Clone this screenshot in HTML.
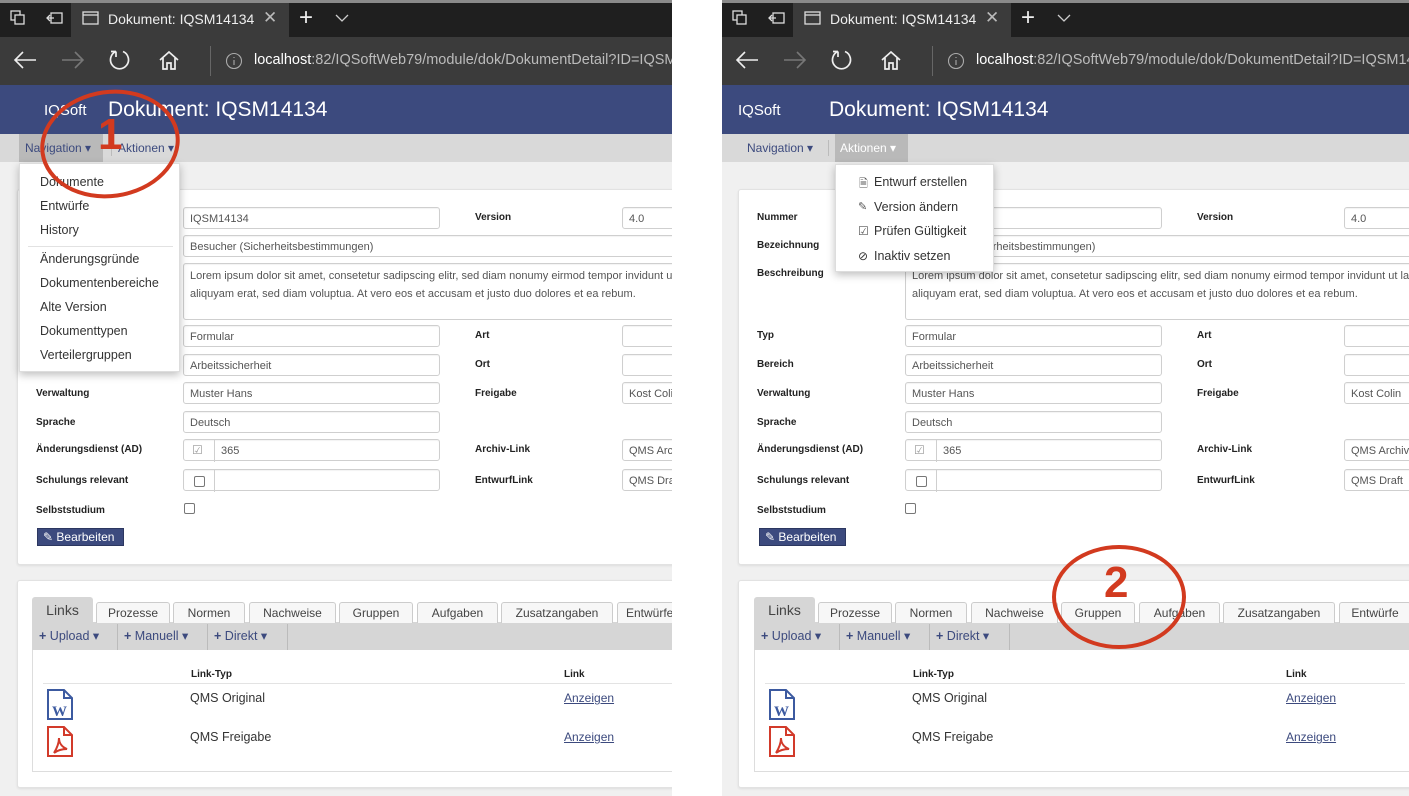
<!DOCTYPE html>
<html><head><meta charset="utf-8">
<style>
*{box-sizing:border-box;margin:0;padding:0}
body{width:1409px;height:796px;background:#fff;position:relative;overflow:hidden;font-family:"Liberation Sans",sans-serif;font-size:12px;color:#333}
.p{position:absolute;top:0;height:796px;overflow:hidden;background:#f0f0f0}
.a{position:absolute;white-space:nowrap}
.tb{position:absolute;left:0;right:0;top:0;height:37px;background:#1f1f1f;border-top:3px solid #8a8a8a}
.atab{position:absolute;left:71px;top:3px;width:218px;height:34px;background:#3b3b3b}
.ab{position:absolute;left:0;right:0;top:37px;height:48px;background:#3b3b3b}
.hd{position:absolute;left:0;right:0;top:85px;height:49px;background:#3c4a7e;color:#fff}
.mb{position:absolute;left:0;right:0;top:134px;height:28px;background:#d9d9d9;color:#3c4a7e;font-size:12px}
.card{position:absolute;background:#fff;border:1px solid #e2e2e2;border-radius:3px;box-shadow:0 1px 2px rgba(0,0,0,.08)}
.lb{position:absolute;font-size:10px;font-weight:bold;color:#222;white-space:nowrap;margin-top:3px}
.in{position:absolute;height:22px;border:1px solid #cfcfcf;border-radius:3px;background:#fff;font-size:11px;color:#555;padding:5px 6px;white-space:nowrap;overflow:hidden;box-shadow:inset 0 1px 1px rgba(0,0,0,.05)}
.cb{position:absolute;width:11px;height:11px;border:1px solid #777;border-radius:2px;background:#fff}
.tab{position:absolute;top:602px;height:21px;border:1px solid #ccc;border-bottom:none;background:#f7f7f7;font-size:12px;color:#444;text-align:center;padding-top:3px;border-radius:3px 3px 0 0;white-space:nowrap;overflow:hidden}
.dd{position:absolute;background:#fff;box-shadow:0 3px 8px rgba(0,0,0,.25);border:1px solid #ddd;font-size:12.5px;color:#333}
.lnk{color:#3c4a7e;text-decoration:underline;font-size:12px}
.circ{position:absolute;border:4px solid #d23a1f;border-radius:50%}
.num{position:absolute;color:#d23a1f;font-weight:bold;font-family:"Liberation Sans",sans-serif}
.ta{height:57px;line-height:18px;padding-top:3px}
</style></head><body>

<!-- LEFT PANEL -->
<div class="p" style="left:0;width:672px">
 <div class="tb"></div><div class="atab"></div>
 <svg class="a" style="left:10px;top:10px" width="16" height="16" fill="none" stroke="#ddd" stroke-width="1.3"><rect x="1" y="1" width="9" height="9"/><rect x="5" y="5" width="9" height="9" fill="#1f1f1f"/></svg>
 <svg class="a" style="left:46px;top:11px" width="18" height="14" fill="none" stroke="#ddd" stroke-width="1.3"><rect x="5" y="2" width="11" height="10"/><path d="M1 7h7M4 4l-3 3 3 3"/></svg>
 <svg class="a" style="left:82px;top:11px" width="17" height="14" fill="none" stroke="#ddd" stroke-width="1.3"><rect x="1" y="1" width="15" height="12"/><path d="M1 4h15"/></svg>
 <div class="a" style="left:108px;top:11px;color:#eee;font-size:14px">Dokument: IQSM14134</div>
 <div class="a" style="left:263px;top:8px;color:#bbb;font-size:17px">✕</div>
 <div class="a" style="left:299px;top:4px;color:#eee;font-size:24px;font-weight:300">+</div>
 <svg class="a" style="left:335px;top:14px" width="14" height="9" fill="none" stroke="#ccc" stroke-width="1.3"><path d="M1 1l6 6 6-6"/></svg>
 <div class="ab"></div>
 <svg class="a" style="left:13px;top:50px" width="24" height="20" fill="none" stroke="#eee" stroke-width="1.6"><path d="M23 10H2M10 2l-8 8 8 8"/></svg>
 <svg class="a" style="left:61px;top:50px" width="24" height="20" fill="none" stroke="#777" stroke-width="1.6"><path d="M1 10h21M14 2l8 8-8 8"/></svg>
 <svg class="a" style="left:109px;top:48px" width="22" height="24" fill="none" stroke="#eee" stroke-width="1.7"><path d="M7 3.5A9 9 0 1 0 14 3.5M7 3.5V9M7 3.5H2"/></svg>
 <svg class="a" style="left:158px;top:50px" width="22" height="20" fill="none" stroke="#eee" stroke-width="1.7"><path d="M2 10L11 2l9 8M5 8v11h4v-6h4v6h4V8"/></svg>
 <div class="a" style="left:210px;top:46px;width:1px;height:30px;background:#666"></div>
 <svg class="a" style="left:225px;top:52px" width="18" height="18" fill="none" stroke="#aaa" stroke-width="1.1"><circle cx="9" cy="9" r="7.5"/><path d="M9 8v5M9 5v1"/></svg>
 <div class="a" style="left:254px;top:52px;color:#bbb;font-size:14.5px"><b style="color:#fff;font-weight:normal">localhost</b>:82/IQSoftWeb79/module/dok/DokumentDetail?ID=IQSM14134</div>
 <div class="hd"><div class="a" style="left:44px;top:17px;font-size:15px">IQSoft</div><div class="a" style="left:108px;top:13px;font-size:21px">Dokument: IQSM14134</div></div>
 <div class="mb">
  <div class="a" style="left:19px;top:0;width:84px;height:28px;background:#b9b9b9"></div>
  <div class="a" style="left:25px;top:7px">Navigation ▾</div>
  <div class="a" style="left:111px;top:6px;width:1px;height:16px;background:#bbb"></div>
  <div class="a" style="left:118px;top:7px">Aktionen ▾</div>
 </div>
 <div class="card" style="left:17px;top:189px;width:700px;height:376px"></div>
 <div class="lb" style="left:36px;top:209px">Nummer</div>
 <div class="lb" style="left:36px;top:237px">Bezeichnung</div>
 <div class="lb" style="left:36px;top:265px">Beschreibung</div>
 <div class="lb" style="left:36px;top:327px">Typ</div>
 <div class="lb" style="left:36px;top:356px">Bereich</div>
 <div class="lb" style="left:36px;top:385px">Verwaltung</div>
 <div class="lb" style="left:36px;top:414px">Sprache</div>
 <div class="lb" style="left:36px;top:441px">Änderungsdienst (AD)</div>
 <div class="lb" style="left:36px;top:472px">Schulungs relevant</div>
 <div class="lb" style="left:36px;top:502px">Selbststudium</div>
 <div class="in" style="left:183px;top:207px;width:257px">IQSM14134</div>
 <div class="in" style="left:183px;top:235px;width:520px">Besucher (Sicherheitsbestimmungen)</div>
 <div class="in ta" style="left:183px;top:263px;width:520px">Lorem ipsum dolor sit amet, consetetur sadipscing elitr, sed diam nonumy eirmod tempor invidunt ut labore et dolore magna<br>aliquyam erat, sed diam voluptua. At vero eos et accusam et justo duo dolores et ea rebum.</div>
 <div class="in" style="left:183px;top:325px;width:257px">Formular</div>
 <div class="in" style="left:183px;top:354px;width:257px">Arbeitssicherheit</div>
 <div class="in" style="left:183px;top:382px;width:257px">Muster Hans</div>
 <div class="in" style="left:183px;top:411px;width:257px">Deutsch</div>
 <div class="in" style="left:183px;top:439px;width:257px;padding-left:37px">365</div>
 <div class="a" style="left:214px;top:440px;width:1px;height:22px;background:#cfcfcf"></div>
 <div class="a" style="left:192px;top:443px;color:#999;font-size:12px">☑</div>
 <div class="in" style="left:183px;top:469px;width:257px"></div>
 <div class="a" style="left:214px;top:470px;width:1px;height:22px;background:#cfcfcf"></div>
 <div class="cb" style="left:194px;top:476px"></div>
 <div class="cb" style="left:184px;top:503px"></div>
 <div class="a" style="left:37px;top:528px;width:87px;height:18px;background:#3c4a7e;border:1px solid #2c3760;color:#fff;font-size:12px;padding:1px 0 0 5px">✎ Bearbeiten</div>
 <div class="lb" style="left:475px;top:209px">Version</div>
 <div class="lb" style="left:475px;top:327px">Art</div>
 <div class="lb" style="left:475px;top:356px">Ort</div>
 <div class="lb" style="left:475px;top:385px">Freigabe</div>
 <div class="lb" style="left:475px;top:441px">Archiv-Link</div>
 <div class="lb" style="left:475px;top:472px">EntwurfLink</div>
 <div class="in" style="left:622px;top:207px;width:100px">4.0</div>
 <div class="in" style="left:622px;top:325px;width:100px"></div>
 <div class="in" style="left:622px;top:354px;width:100px"></div>
 <div class="in" style="left:622px;top:382px;width:100px">Kost Colin</div>
 <div class="in" style="left:622px;top:439px;width:100px">QMS Archiv</div>
 <div class="in" style="left:622px;top:469px;width:100px">QMS Draft</div>

 <div class="card" style="left:17px;top:580px;width:700px;height:208px"></div>
 <div class="a" style="left:32px;top:622px;width:680px;height:150px;border:1px solid #ddd;background:#fff"></div>
 <div class="a" style="left:32px;top:622px;width:680px;height:28px;background:#d6d6d6"></div>
 <div class="tab" style="left:32px;top:597px;width:61px;height:26px;background:#d6d6d6;border-color:#d6d6d6;font-size:14px;padding-top:4px">Links</div>
 <div class="tab" style="left:96px;width:74px">Prozesse</div>
 <div class="tab" style="left:173px;width:72px">Normen</div>
 <div class="tab" style="left:249px;width:87px">Nachweise</div>
 <div class="tab" style="left:339px;width:74px">Gruppen</div>
 <div class="tab" style="left:417px;width:81px">Aufgaben</div>
 <div class="tab" style="left:501px;width:112px">Zusatzangaben</div>
 <div class="tab" style="left:617px;width:80px;text-align:left;padding-left:8px">Entwürfe</div>
 <div class="a" style="left:39px;top:628px;color:#3c4a7e;font-size:12.5px"><b>+</b> Upload ▾</div>
 <div class="a" style="left:117px;top:624px;width:1px;height:26px;background:#bbb"></div>
 <div class="a" style="left:124px;top:628px;color:#3c4a7e;font-size:12.5px"><b>+</b> Manuell ▾</div>
 <div class="a" style="left:207px;top:624px;width:1px;height:26px;background:#bbb"></div>
 <div class="a" style="left:214px;top:628px;color:#3c4a7e;font-size:12.5px"><b>+</b> Direkt ▾</div>
 <div class="a" style="left:287px;top:624px;width:1px;height:26px;background:#bbb"></div>
 <div class="lb" style="left:191px;top:666px">Link-Typ</div>
 <div class="lb" style="left:564px;top:666px">Link</div>
 <div class="a" style="left:43px;top:683px;width:640px;height:1px;background:#e3e3e3"></div>
 <svg class="a" style="left:46px;top:688px" width="28" height="33" fill="none" stroke="#3c5aa0" stroke-width="2"><path d="M2 2h16l8 8v21H2zM18 2v8h8"/><text x="6" y="28" font-family="Liberation Serif" font-size="15" font-weight="bold" fill="#3c5aa0" stroke="none">W</text></svg>
 <div class="a" style="left:190px;top:691px;font-size:12.5px">QMS Original</div>
 <div class="a lnk" style="left:564px;top:691px">Anzeigen</div>
 <svg class="a" style="left:46px;top:725px" width="28" height="33" fill="none" stroke="#d23a2a" stroke-width="2"><path d="M2 2h16l8 8v21H2zM18 2v8h8M8 28c3-5 5-10 5-15 0 5 3 9 8 11-5 0-9 1-13 4"/></svg>
 <div class="a" style="left:190px;top:730px;font-size:12.5px">QMS Freigabe</div>
 <div class="a lnk" style="left:564px;top:730px">Anzeigen</div>

 <div class="dd" style="left:19px;top:163px;width:161px;height:209px">
  <div class="a" style="left:20px;top:11px">Dokumente</div>
  <div class="a" style="left:20px;top:35px">Entwürfe</div>
  <div class="a" style="left:20px;top:59px">History</div>
  <div class="a" style="left:8px;top:82px;width:145px;height:1px;background:#e2e2e2"></div>
  <div class="a" style="left:20px;top:88px">Änderungsgründe</div>
  <div class="a" style="left:20px;top:112px">Dokumentenbereiche</div>
  <div class="a" style="left:20px;top:136px">Alte Version</div>
  <div class="a" style="left:20px;top:160px">Dokumenttypen</div>
  <div class="a" style="left:20px;top:184px">Verteilergruppen</div>
 </div>
 <div class="circ" style="left:40px;top:90px;width:140px;height:108px;transform:rotate(-8deg)"></div>
 <div class="num" style="left:98px;top:110px;font-size:44px">1</div>
</div>

<!-- RIGHT PANEL -->
<div class="p" style="left:722px;width:687px">
 <div class="tb"></div><div class="atab"></div>
 <svg class="a" style="left:10px;top:10px" width="16" height="16" fill="none" stroke="#ddd" stroke-width="1.3"><rect x="1" y="1" width="9" height="9"/><rect x="5" y="5" width="9" height="9" fill="#1f1f1f"/></svg>
 <svg class="a" style="left:46px;top:11px" width="18" height="14" fill="none" stroke="#ddd" stroke-width="1.3"><rect x="5" y="2" width="11" height="10"/><path d="M1 7h7M4 4l-3 3 3 3"/></svg>
 <svg class="a" style="left:82px;top:11px" width="17" height="14" fill="none" stroke="#ddd" stroke-width="1.3"><rect x="1" y="1" width="15" height="12"/><path d="M1 4h15"/></svg>
 <div class="a" style="left:108px;top:11px;color:#eee;font-size:14px">Dokument: IQSM14134</div>
 <div class="a" style="left:263px;top:8px;color:#bbb;font-size:17px">✕</div>
 <div class="a" style="left:299px;top:4px;color:#eee;font-size:24px;font-weight:300">+</div>
 <svg class="a" style="left:335px;top:14px" width="14" height="9" fill="none" stroke="#ccc" stroke-width="1.3"><path d="M1 1l6 6 6-6"/></svg>
 <div class="ab"></div>
 <svg class="a" style="left:13px;top:50px" width="24" height="20" fill="none" stroke="#eee" stroke-width="1.6"><path d="M23 10H2M10 2l-8 8 8 8"/></svg>
 <svg class="a" style="left:61px;top:50px" width="24" height="20" fill="none" stroke="#777" stroke-width="1.6"><path d="M1 10h21M14 2l8 8-8 8"/></svg>
 <svg class="a" style="left:109px;top:48px" width="22" height="24" fill="none" stroke="#eee" stroke-width="1.7"><path d="M7 3.5A9 9 0 1 0 14 3.5M7 3.5V9M7 3.5H2"/></svg>
 <svg class="a" style="left:158px;top:50px" width="22" height="20" fill="none" stroke="#eee" stroke-width="1.7"><path d="M2 10L11 2l9 8M5 8v11h4v-6h4v6h4V8"/></svg>
 <div class="a" style="left:210px;top:46px;width:1px;height:30px;background:#666"></div>
 <svg class="a" style="left:225px;top:52px" width="18" height="18" fill="none" stroke="#aaa" stroke-width="1.1"><circle cx="9" cy="9" r="7.5"/><path d="M9 8v5M9 5v1"/></svg>
 <div class="a" style="left:254px;top:52px;color:#bbb;font-size:14.5px"><b style="color:#fff;font-weight:normal">localhost</b>:82/IQSoftWeb79/module/dok/DokumentDetail?ID=IQSM14134</div>
 <div class="hd"><div class="a" style="left:16px;top:17px;font-size:15px">IQSoft</div><div class="a" style="left:107px;top:13px;font-size:21px">Dokument: IQSM14134</div></div>
 <div class="mb">
  <div class="a" style="left:25px;top:7px">Navigation ▾</div>
  <div class="a" style="left:106px;top:6px;width:1px;height:16px;background:#bbb"></div>
  <div class="a" style="left:113px;top:0;width:73px;height:28px;background:#b9b9b9"></div>
  <div class="a" style="left:118px;top:7px;color:#fff">Aktionen ▾</div>
 </div>
 <div class="card" style="left:16px;top:189px;width:700px;height:376px"></div>
 <div class="lb" style="left:35px;top:209px">Nummer</div>
 <div class="lb" style="left:35px;top:237px">Bezeichnung</div>
 <div class="lb" style="left:35px;top:265px">Beschreibung</div>
 <div class="lb" style="left:35px;top:327px">Typ</div>
 <div class="lb" style="left:35px;top:356px">Bereich</div>
 <div class="lb" style="left:35px;top:385px">Verwaltung</div>
 <div class="lb" style="left:35px;top:414px">Sprache</div>
 <div class="lb" style="left:35px;top:441px">Änderungsdienst (AD)</div>
 <div class="lb" style="left:35px;top:472px">Schulungs relevant</div>
 <div class="lb" style="left:35px;top:502px">Selbststudium</div>
 <div class="in" style="left:183px;top:207px;width:257px">IQSM14134</div>
 <div class="in" style="left:183px;top:235px;width:520px">Besucher (Sicherheitsbestimmungen)</div>
 <div class="in ta" style="left:183px;top:263px;width:520px">Lorem ipsum dolor sit amet, consetetur sadipscing elitr, sed diam nonumy eirmod tempor invidunt ut labore et dolore magna<br>aliquyam erat, sed diam voluptua. At vero eos et accusam et justo duo dolores et ea rebum.</div>
 <div class="in" style="left:183px;top:325px;width:257px">Formular</div>
 <div class="in" style="left:183px;top:354px;width:257px">Arbeitssicherheit</div>
 <div class="in" style="left:183px;top:382px;width:257px">Muster Hans</div>
 <div class="in" style="left:183px;top:411px;width:257px">Deutsch</div>
 <div class="in" style="left:183px;top:439px;width:257px;padding-left:37px">365</div>
 <div class="a" style="left:214px;top:440px;width:1px;height:22px;background:#cfcfcf"></div>
 <div class="a" style="left:192px;top:443px;color:#999;font-size:12px">☑</div>
 <div class="in" style="left:183px;top:469px;width:257px"></div>
 <div class="a" style="left:214px;top:470px;width:1px;height:22px;background:#cfcfcf"></div>
 <div class="cb" style="left:194px;top:476px"></div>
 <div class="cb" style="left:183px;top:503px"></div>
 <div class="a" style="left:37px;top:528px;width:87px;height:18px;background:#3c4a7e;border:1px solid #2c3760;color:#fff;font-size:12px;padding:1px 0 0 5px">✎ Bearbeiten</div>
 <div class="lb" style="left:475px;top:209px">Version</div>
 <div class="lb" style="left:475px;top:327px">Art</div>
 <div class="lb" style="left:475px;top:356px">Ort</div>
 <div class="lb" style="left:475px;top:385px">Freigabe</div>
 <div class="lb" style="left:475px;top:441px">Archiv-Link</div>
 <div class="lb" style="left:475px;top:472px">EntwurfLink</div>
 <div class="in" style="left:622px;top:207px;width:100px">4.0</div>
 <div class="in" style="left:622px;top:325px;width:100px"></div>
 <div class="in" style="left:622px;top:354px;width:100px"></div>
 <div class="in" style="left:622px;top:382px;width:100px">Kost Colin</div>
 <div class="in" style="left:622px;top:439px;width:100px">QMS Archiv</div>
 <div class="in" style="left:622px;top:469px;width:100px">QMS Draft</div>

 <div class="card" style="left:16px;top:580px;width:700px;height:208px"></div>
 <div class="a" style="left:32px;top:622px;width:680px;height:150px;border:1px solid #ddd;background:#fff"></div>
 <div class="a" style="left:32px;top:622px;width:680px;height:28px;background:#d6d6d6"></div>
 <div class="tab" style="left:32px;top:597px;width:61px;height:26px;background:#d6d6d6;border-color:#d6d6d6;font-size:14px;padding-top:4px">Links</div>
 <div class="tab" style="left:96px;width:74px">Prozesse</div>
 <div class="tab" style="left:173px;width:72px">Normen</div>
 <div class="tab" style="left:249px;width:87px">Nachweise</div>
 <div class="tab" style="left:339px;width:74px">Gruppen</div>
 <div class="tab" style="left:417px;width:81px">Aufgaben</div>
 <div class="tab" style="left:501px;width:112px">Zusatzangaben</div>
 <div class="tab" style="left:617px;width:72px">Entwürfe</div>
 <div class="a" style="left:39px;top:628px;color:#3c4a7e;font-size:12.5px"><b>+</b> Upload ▾</div>
 <div class="a" style="left:117px;top:624px;width:1px;height:26px;background:#bbb"></div>
 <div class="a" style="left:124px;top:628px;color:#3c4a7e;font-size:12.5px"><b>+</b> Manuell ▾</div>
 <div class="a" style="left:207px;top:624px;width:1px;height:26px;background:#bbb"></div>
 <div class="a" style="left:214px;top:628px;color:#3c4a7e;font-size:12.5px"><b>+</b> Direkt ▾</div>
 <div class="a" style="left:287px;top:624px;width:1px;height:26px;background:#bbb"></div>
 <div class="lb" style="left:191px;top:666px">Link-Typ</div>
 <div class="lb" style="left:564px;top:666px">Link</div>
 <div class="a" style="left:43px;top:683px;width:640px;height:1px;background:#e3e3e3"></div>
 <svg class="a" style="left:46px;top:688px" width="28" height="33" fill="none" stroke="#3c5aa0" stroke-width="2"><path d="M2 2h16l8 8v21H2zM18 2v8h8"/><text x="6" y="28" font-family="Liberation Serif" font-size="15" font-weight="bold" fill="#3c5aa0" stroke="none">W</text></svg>
 <div class="a" style="left:190px;top:691px;font-size:12.5px">QMS Original</div>
 <div class="a lnk" style="left:564px;top:691px">Anzeigen</div>
 <svg class="a" style="left:46px;top:725px" width="28" height="33" fill="none" stroke="#d23a2a" stroke-width="2"><path d="M2 2h16l8 8v21H2zM18 2v8h8M8 28c3-5 5-10 5-15 0 5 3 9 8 11-5 0-9 1-13 4"/></svg>
 <div class="a" style="left:190px;top:730px;font-size:12.5px">QMS Freigabe</div>
 <div class="a lnk" style="left:564px;top:730px">Anzeigen</div>

 <div class="dd" style="left:113px;top:164px;width:159px;height:108px">
  <div class="a" style="left:23px;top:10px;font-size:11px;color:#555">🗎</div><div class="a" style="left:38px;top:10px">Entwurf erstellen</div>
  <div class="a" style="left:22px;top:35px;font-size:11px;color:#555">✎</div><div class="a" style="left:38px;top:35px">Version ändern</div>
  <div class="a" style="left:22px;top:59px;font-size:12px;color:#555">☑</div><div class="a" style="left:38px;top:59px">Prüfen Gültigkeit</div>
  <div class="a" style="left:22px;top:84px;font-size:12px;color:#333">⊘</div><div class="a" style="left:38px;top:84px">Inaktiv setzen</div>
 </div>
 <div class="circ" style="left:330px;top:545px;width:134px;height:104px"></div>
 <div class="num" style="left:382px;top:558px;font-size:44px">2</div>
</div>
</body></html>
